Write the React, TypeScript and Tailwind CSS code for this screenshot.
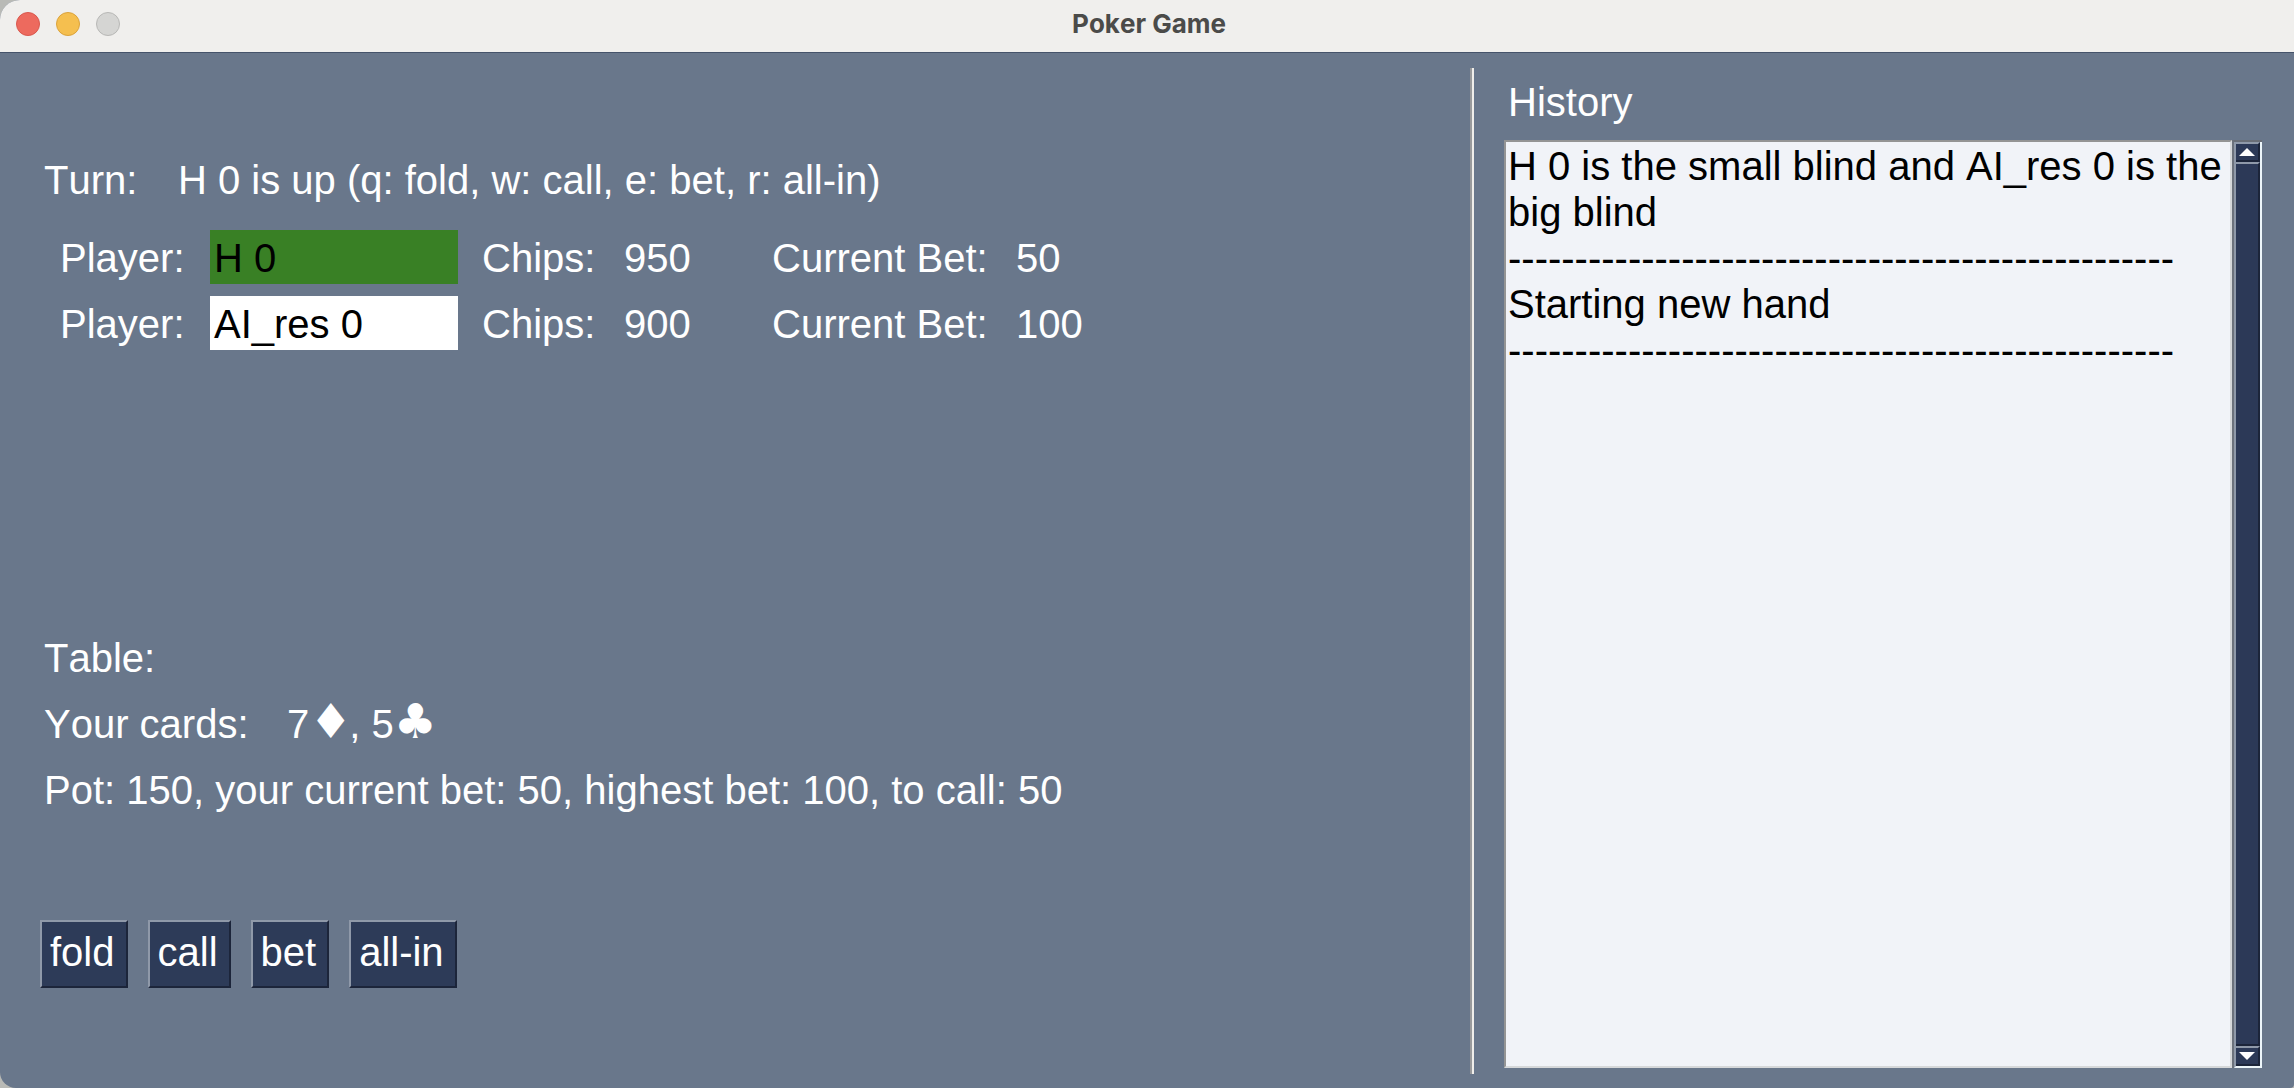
import React from "react";

const players = [
  { name: "H 0", chips: 950, bet: 50, active: true },
  { name: "AI_res 0", chips: 900, bet: 100, active: false },
];

const rule = "-".repeat(50);
const history = ["H 0 is the small blind and AI_res 0 is the big blind", rule, "Starting new hand", rule].join("\n");

function TitleBar() {
  return (
    <header className="relative flex h-[53px] shrink-0 items-center justify-center rounded-tl-[20px] border-b border-[#45536a] bg-[#f0efed] pb-1">
      <div className="absolute left-4 top-3 flex gap-4">
        <button aria-label="Close" className="size-6 rounded-full border border-[#d9584e] bg-[#ed6a5e]" />
        <button aria-label="Minimize" className="size-6 rounded-full border border-[#dba33c] bg-[#f5bf4f]" />
        <button aria-label="Zoom" className="size-6 rounded-full border border-[#b8b8b6] bg-[#d5d5d3]" />
      </div>
      <h1 className="pl-1 font-['Inter'] text-[26px] leading-8 font-bold text-[#4b4b49]">Poker Game</h1>
    </header>
  );
}

function Suit({ children }: { children: string }) {
  return <span className="inline-block w-10 text-center font-['DejaVu_Sans'] text-[48px] leading-10">{children}</span>;
}

function ActionButton({ label }: { label: string }) {
  return (
    <button className="h-[68px] border-2 border-t-[#8f99a9] border-r-[#1c253a] border-b-[#1c253a] border-l-[#8f99a9] bg-[#2d3b58] pr-[11px] pb-1 pl-2">
      {label}
    </button>
  );
}

function ScrollArrow({ up }: { up?: boolean }) {
  return (
    <button
      aria-label={up ? "Scroll up" : "Scroll down"}
      className="flex h-5 shrink-0 items-center justify-center border-t-2 border-r-2 border-b-2 border-t-[#8f99a9] border-r-[#1c253a] border-b-[#1c253a]"
    >
      <svg viewBox="0 0 16 8" className="h-2 w-4 fill-white">
        <path d={up ? "M8 0 16 8H0z" : "M0 0h16L8 8z"} />
      </svg>
    </button>
  );
}

function Scrollbar() {
  return (
    <div className="flex w-[30px] shrink-0 flex-col border-t-2 border-l-2 border-t-[#696e77] border-l-[#6c727c]">
      <div className="flex grow flex-col border-r-2 border-b-2 border-l-2 border-r-[#edf6fa] border-b-[#edf6fa] border-l-[#8f99a9] bg-[#2c3957]">
        <ScrollArrow up />
        <div className="grow border-t-2 border-r-2 border-b-2 border-t-[#8f99a9] border-r-[#1c253a] border-b-[#1c253a]" />
        <ScrollArrow />
      </div>
    </div>
  );
}

export default function App() {
  return (
    <div className="bg-[#b9bab6]">
      <div className="flex min-h-screen flex-col rounded-tl-[20px] rounded-br-[4px] rounded-bl-[16px] bg-[#69778b] font-['Liberation_Sans',sans-serif] text-[40px] leading-[46px] text-white [font-kerning:none]">
        <TitleBar />
        <div className="grid grow grid-cols-[1470fr_824fr]">
          <main className="flex flex-col pt-[100px] pl-11">
            <div className="flex h-[54px] items-center">
              <span className="w-[134px]">Turn:</span>
              <span>H 0 is up (q: fold, w: call, e: bet, r: all-in)</span>
            </div>
            <div className="mt-[23px] flex flex-col gap-3 pl-4">
              {players.map((p) => (
                <div key={p.name} className="flex h-[54px] items-baseline">
                  <span className="w-[150px]">Player:</span>
                  <span
                    className={
                      p.active
                        ? "w-[248px] bg-[#398025] pt-[5px] pb-[3px] pl-1 text-black"
                        : "w-[248px] bg-white pt-[5px] pb-[3px] pl-1 text-black"
                    }
                  >
                    {p.name}
                  </span>
                  <span className="ml-6 w-[142px]">Chips:</span>
                  <span className="w-[148px]">{p.chips}</span>
                  <span className="w-[244px]">Current Bet:</span>
                  <span>{p.bet}</span>
                </div>
              ))}
            </div>
            <div className="mt-[281px] flex flex-col gap-3">
              <div className="flex h-[54px] items-center">Table:</div>
              <div className="flex h-[54px] items-center">
                <span className="w-[243px]">Your cards:</span>
                <span>
                  7<Suit>♦</Suit>, 5<Suit>♣</Suit>
                </span>
              </div>
              <div className="flex h-[54px] items-center">
                Pot: 150, your current bet: 50, highest bet: 100, to call: 50
              </div>
            </div>
            <div className="mt-[103px] -ml-1 flex gap-5">
              <ActionButton label="fold" />
              <ActionButton label="call" />
              <ActionButton label="bet" />
              <ActionButton label="all-in" />
            </div>
          </main>
          <aside className="flex">
            <div className="mt-[15px] mb-[14px] w-1 border-r-2 border-l-2 border-r-[#f0eeea] border-l-[#999a9c]" />
            <div className="flex grow flex-col pt-[26px] pr-8 pb-5 pl-[30px]">
              <label htmlFor="history" className="mb-[15px] pl-1">
                History
              </label>
              <div className="flex grow">
                <textarea
                  id="history"
                  readOnly
                  defaultValue={history}
                  className="grow resize-none overflow-hidden border-2 border-t-[#949494] border-r-[#d6d8da] border-b-[#d6d8da] border-l-[#949494] bg-[#f1f3f8] px-[2px] py-[1px] text-black outline-none"
                />
                <Scrollbar />
              </div>
            </div>
          </aside>
        </div>
      </div>
    </div>
  );
}
